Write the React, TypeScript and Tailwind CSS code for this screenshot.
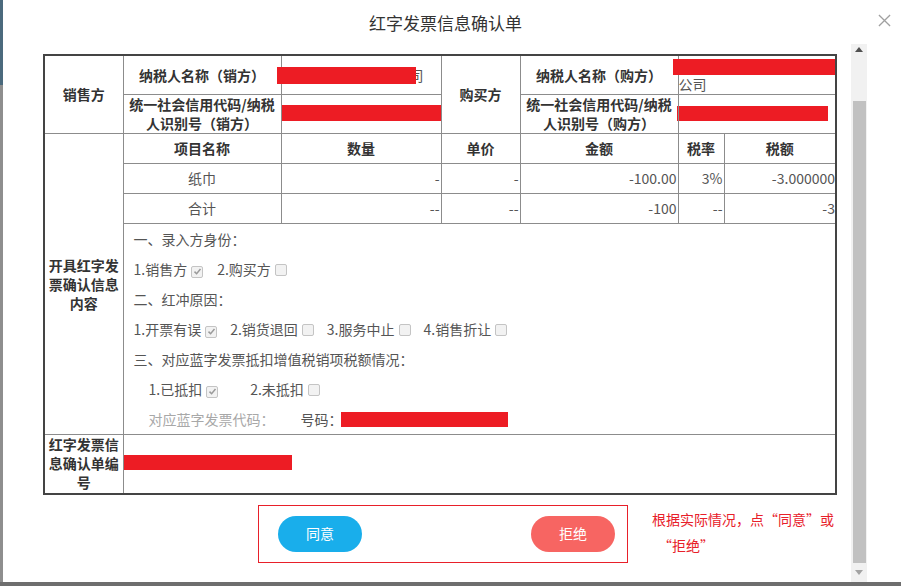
import React from "react";

const cell = "border border-[#8c8c8c] p-0";
const label = `${cell} text-center font-bold text-[#333] align-middle`;

function Box({ checked }: { checked?: boolean }) {
    return (
        <span className="inline-flex items-center justify-center w-[12px] h-[12px] ml-[4px] border border-[#c4c4c4] rounded-[2px] bg-[#f2f2f2] align-[-1px]">
            {checked && (
                <svg viewBox="0 0 12 12" className="w-[9px] h-[9px]">
                    <path d="M2 6.2 L4.8 9 L10 2.8" fill="none" stroke="#9a9a9a" strokeWidth="2" />
                </svg>
            )}
        </span>
    );
}

function Red({ className }: { className: string }) {
    return <span className={`block bg-[#ed1c24] ${className}`} />;
}

export default function App() {
    return (
        <div
            className="w-[901px] h-[586px] flex bg-[#6e6e6e] overflow-hidden"
            style={{ fontFamily: '"Noto Sans CJK SC", "Liberation Sans", sans-serif' }}
        >
            <div className="w-[3px] h-[582px] flex flex-col">
                <div className="h-[85px] bg-[#4b6a7d]" />
                <div className="flex-1 bg-[#8e8e8e]" />
            </div>
            <div className="flex-1 h-[582px] bg-white flex flex-col">
                {/* header */}
                <div className="h-[44px] relative flex items-center justify-center pr-[13px]">
                    <span className="text-[17px] text-[#333] leading-none">红字发票信息确认单</span>
                    <svg viewBox="0 0 14 14" className="absolute right-[10px] top-[14px] w-[13px] h-[13px]">
                        <path d="M1 1 L13 13 M13 1 L1 13" stroke="#a0a0a0" strokeWidth="1.4" />
                    </svg>
                </div>

                <div className="flex flex-1">
                    {/* scroll content */}
                    <div className="w-[848px] pl-[40px] pt-[10px] text-[14px] text-[#555]">
                        <table className="table-fixed border-collapse border-2 border-[#444] w-[792px]">
                            <colgroup>
                                <col className="w-[79px]" />
                                <col className="w-[158px]" />
                                <col className="w-[160px]" />
                                <col className="w-[79px]" />
                                <col className="w-[158px]" />
                                <col className="w-[46px]" />
                                <col className="w-[112px]" />
                            </colgroup>
                            <tbody>
                                <tr className="h-[39px]">
                                    <td rowSpan={2} className={label}>销售方</td>
                                    <td className={label}>纳税人名称（销方）</td>
                                    <td className={cell}>
                                        <div className="flex items-center">
                                            <Red className="relative z-10 -ml-[5px] w-[139px] h-[17px]" />
                                            <span className="-ml-[6px] text-[#555] leading-none">司</span>
                                        </div>
                                    </td>
                                    <td rowSpan={2} className={label}>购买方</td>
                                    <td className={label}>纳税人名称（购方）</td>
                                    <td colSpan={2} className={`${cell} align-top`}>
                                        <div className="flex flex-col pt-[3px]">
                                            <Red className="-ml-[6px] w-[162px] h-[16px]" />
                                            <span className="leading-[19px] text-[#555]">公司</span>
                                        </div>
                                    </td>
                                </tr>
                                <tr className="h-[38px]">
                                    <td className={`${label} leading-[19px]`}>
                                        统一社会信用代码/纳税
                                        <br />
                                        人识别号（销方）
                                    </td>
                                    <td className={cell}>
                                        <Red className="-mt-[2px] w-[159px] h-[16px]" />
                                    </td>
                                    <td className={`${label} leading-[19px]`}>
                                        统一社会信用代码/纳税
                                        <br />
                                        人识别号（购方）
                                    </td>
                                    <td colSpan={2} className={cell}>
                                        <Red className="-mt-[2px] -ml-[2px] w-[151px] h-[15px]" />
                                    </td>
                                </tr>
                                <tr className="h-[30px]">
                                    <td rowSpan={4} className={`${label} px-[2px] leading-[19px]`}>
                                        开具红字发票确认信息内容
                                    </td>
                                    <td className={label}>项目名称</td>
                                    <td className={label}>数量</td>
                                    <td className={label}>单价</td>
                                    <td className={label}>金额</td>
                                    <td className={label}>税率</td>
                                    <td className={label}>税额</td>
                                </tr>
                                <tr className="h-[30px] text-[#555]">
                                    <td className={`${cell} text-center`}>纸巾</td>
                                    <td className={`${cell} text-right pr-[1px]`}>-</td>
                                    <td className={`${cell} text-right pr-[1px]`}>-</td>
                                    <td className={`${cell} text-right pr-[1px]`}>-100.00</td>
                                    <td className={`${cell} text-right pr-[1px]`}>3%</td>
                                    <td className={`${cell} text-right`}>-3.000000</td>
                                </tr>
                                <tr className="h-[30px] text-[#555]">
                                    <td className={`${cell} text-center`}>合计</td>
                                    <td className={`${cell} text-right pr-[1px]`}>--</td>
                                    <td className={`${cell} text-right pr-[1px]`}>--</td>
                                    <td className={`${cell} text-right pr-[1px]`}>-100</td>
                                    <td className={`${cell} text-right pr-[1px]`}>--</td>
                                    <td className={`${cell} text-right`}>-3</td>
                                </tr>
                                <tr className="h-[210px]">
                                    <td colSpan={6} className={`${cell} align-top pl-[10px] leading-[30px] text-[#555]`}>
                                        <div>一、录入方身份：</div>
                                        <div className="flex items-center gap-[14px]">
                                            <span>1.销售方<Box checked /></span>
                                            <span>2.购买方<Box /></span>
                                        </div>
                                        <div>二、红冲原因：</div>
                                        <div className="flex items-center gap-[13px]">
                                            <span>1.开票有误<Box checked /></span>
                                            <span>2.销货退回<Box /></span>
                                            <span>3.服务中止<Box /></span>
                                            <span>4.销售折让<Box /></span>
                                        </div>
                                        <div>三、对应蓝字发票抵扣增值税销项税额情况：</div>
                                        <div className="flex items-center gap-[32px] pl-[15px]">
                                            <span>1.已抵扣<Box checked /></span>
                                            <span>2.未抵扣<Box /></span>
                                        </div>
                                        <div className="flex items-center pl-[15px]">
                                            <span className="text-[#a8a8a8] w-[152px]">对应蓝字发票代码：</span>
                                            <span>号码：</span>
                                            <Red className="-ml-[2px] w-[167px] h-[15px]" />
                                        </div>
                                    </td>
                                </tr>
                                <tr className="h-[59px]">
                                    <td className={`${label} px-[2px] leading-[19px]`}>红字发票信息确认单编号</td>
                                    <td colSpan={6} className={`${cell} align-middle`}>
                                        <Red className="-mt-[3px] w-[168px] h-[15px]" />
                                    </td>
                                </tr>
                            </tbody>
                        </table>

                        <div className="flex items-center mt-[10px] ml-[215px]">
                            <div className="w-[370px] h-[58px] border border-[#e8202a] flex items-center justify-between pl-[19px] pr-[12px]">
                                <button className="w-[84px] h-[36px] rounded-full bg-[#19aeeb] text-white text-[14px]">同意</button>
                                <button className="w-[84px] h-[36px] rounded-full bg-[#f76562] text-white text-[14px]">拒绝</button>
                            </div>
                            <div className="ml-[24px] text-[14px] leading-[26px] text-[#e8202a] -mt-[3px]">
                                根据实际情况，点“同意”或
                                <br />
                                <span className="pl-[6px]">“拒绝”</span>
                            </div>
                        </div>
                    </div>

                    {/* scrollbar */}
                    <div className="w-[16px] bg-[#f1f1f1] flex flex-col items-center">
                        <svg viewBox="0 0 8 5" className="w-[8px] h-[5px] mt-[3px]">
                            <path d="M0 5 L4 0 L8 5 Z" fill="#505050" />
                        </svg>
                        <div className="w-[13px] ml-[1px] mt-[49px] h-[462px] bg-[#c1c1c1]" />
                        <svg viewBox="0 0 8 5" className="w-[8px] h-[5px] mt-[7px]">
                            <path d="M0 0 L8 0 L4 5 Z" fill="#a3a3a3" />
                        </svg>
                    </div>
                    <div className="flex-1" />
                </div>
            </div>
        </div>
    );
}
